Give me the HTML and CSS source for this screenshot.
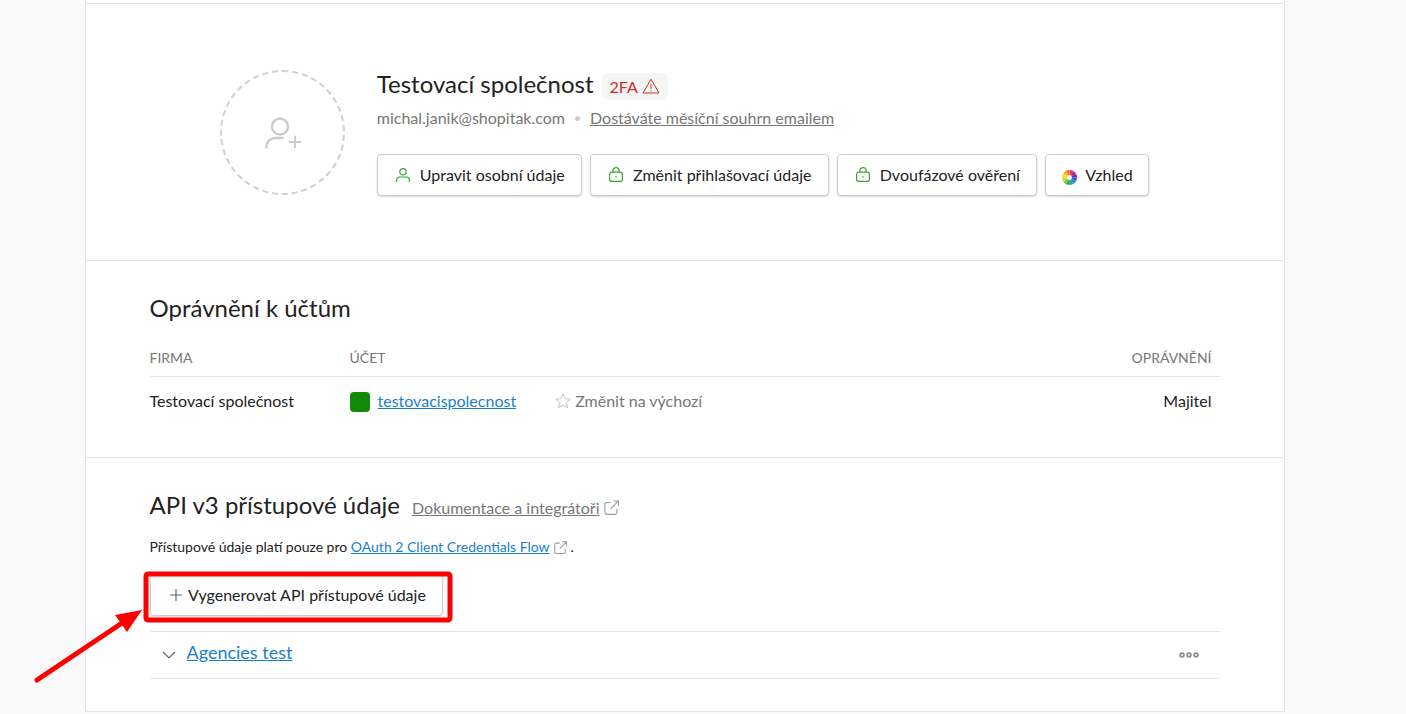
FILE: index.html
```html
<!DOCTYPE html>
<html lang="cs">
<head>
<meta charset="utf-8">
<title>Profil</title>
<link rel="stylesheet" href="styles.css">
</head>
<body>
<main class="card">
  <div class="top-strip"></div>
  <section class="profile">
    <div class="avatar">
      <svg class="avatar-icon" viewBox="0 0 36 36" width="36" height="36" fill="none" stroke="#ccc" stroke-width="2.400">
        <circle cx="15" cy="11.500" r="8"/>
        <path d="M1.500 33.500v-2c0-5 4-8.500 9-8.500h8"/>
        <path d="M24 27h12M30 21v12" stroke-width="2"/>
      </svg>
    </div>
    <div class="profile-body">
      <div class="title-row">
        <h1 class="title">Testovací společnost</h1>
        <span class="badge">2FA
          <svg viewBox="0 0 18 16" width="18" height="16" fill="none" stroke="#c9302c" stroke-width="1" stroke-linejoin="round"><path d="M9 1.200 17 15H1z"/><path d="M9 6v5M9 12.200v1.200"/></svg>
        </span>
      </div>
      <div class="meta-row">
        <span class="email">michal.janik@shopitak.com</span>
        <span class="dot"></span>
        <a class="muted-link" href="#">Dostáváte měsíční souhrn emailem</a>
      </div>
      <div class="button-row">
        <button class="btn">
          <svg class="btn-icon" viewBox="0 0 14 14" fill="none" stroke="#3aa535" stroke-width="1.200"><circle cx="7" cy="3.800" r="3.200"/><path d="M.6 14v-1.500C.6 10.300 2.300 9 4 9h6c1.700 0 3.400 1.300 3.400 3.500V14"/></svg>
          Upravit osobní údaje
        </button>
        <button class="btn">
          <svg class="btn-icon btn-lock" viewBox="0 0 14 15" fill="none" stroke="#3aa535" stroke-width="1.200"><rect x=".6" y="5.200" width="12.800" height="9.200" rx="2.200"/><path d="M3.800 5.200V3.800a3.200 3.200 0 0 1 6.400 0v1.400"/><circle cx="7" cy="9.800" r=".8" fill="#3aa535" stroke="none"/></svg>
          Změnit přihlašovací údaje
        </button>
        <button class="btn">
          <svg class="btn-icon btn-lock" viewBox="0 0 14 15" fill="none" stroke="#3aa535" stroke-width="1.200"><rect x=".6" y="5.200" width="12.800" height="9.200" rx="2.200"/><path d="M3.800 5.200V3.800a3.200 3.200 0 0 1 6.400 0v1.400"/><circle cx="7" cy="9.800" r=".8" fill="#3aa535" stroke="none"/></svg>
          Dvoufázové ověření
        </button>
        <button class="btn btn-wheel">
          <svg class="wheel" viewBox="0 0 16 16">
            <path d="M8 8V0A8 8 0 0 1 12 1.070z" fill="#e8373f"/>
            <path d="M8 8 12 1.070A8 8 0 0 1 14.930 4z" fill="#b5268f"/>
            <path d="M8 8 14.930 4A8 8 0 0 1 16 8z" fill="#6a2cb0"/>
            <path d="M8 8H16A8 8 0 0 1 14.930 12z" fill="#3f51d8"/>
            <path d="M8 8 14.930 12A8 8 0 0 1 12 14.930z" fill="#1e88e5"/>
            <path d="M8 8 12 14.930A8 8 0 0 1 8 16z" fill="#1fa8a0"/>
            <path d="M8 8V16A8 8 0 0 1 4 14.930z" fill="#3aa53c"/>
            <path d="M8 8 4 14.930A8 8 0 0 1 1.070 12z" fill="#8bc34a"/>
            <path d="M8 8 1.070 12A8 8 0 0 1 0 8z" fill="#cddc39"/>
            <path d="M8 8H0A8 8 0 0 1 1.070 4z" fill="#fde02f"/>
            <path d="M8 8 1.070 4A8 8 0 0 1 4 1.070z" fill="#fdb32a"/>
            <path d="M8 8 4 1.070A8 8 0 0 1 8 0z" fill="#f5761f"/>
            <circle cx="8" cy="8" r="2.600" fill="#fff"/>
          </svg>
          Vzhled
        </button>
      </div>
    </div>
  </section>

  <section class="permissions">
    <h2 class="heading">Oprávnění k účtům</h2>
    <div class="table">
      <div class="table-head">
        <span class="col-firm">FIRMA</span>
        <span class="col-account">ÚČET</span>
        <span class="col-role">OPRÁVNĚNÍ</span>
      </div>
      <div class="table-row">
        <span class="col-firm">Testovací společnost</span>
        <span class="col-account account-cell">
          <span class="swatch"></span>
          <a class="link" href="#">testovacispolecnost</a>
          <span class="set-default">
            <svg viewBox="0 0 16 16" width="16" height="16" fill="none" stroke="#c4c4c4" stroke-width="1" stroke-linejoin="round"><path d="M8 .9l2.200 4.700 5 .6-3.700 3.500 1 5.100L8 12.300l-4.500 2.500 1-5.100L.8 6.200l5-.6z"/></svg>
            Změnit na výchozí
          </span>
        </span>
        <span class="col-role">Majitel</span>
      </div>
    </div>
  </section>

  <section class="api">
    <div class="api-title">
      <h2 class="heading">API v3 přístupové údaje</h2>
      <a class="muted-link doc-link" href="#">Dokumentace a integrátoři</a>
      <svg class="ext" viewBox="0 0 16 16" width="15" height="15" fill="none" stroke="#999" stroke-width="1.200"><path d="M7 2.600H3A2 2 0 0 0 1 4.600v8.800a2 2 0 0 0 2 2h8.800a2 2 0 0 0 2-2V9.500"/><path d="M7 9.500 15 1.500M10 1h5.500v5.500"/></svg>
    </div>
    <p class="note">Přístupové údaje platí pouze pro <a class="link" href="#">OAuth 2 Client Credentials Flow</a>
      <svg class="ext-small" viewBox="0 0 16 16" width="13" height="13" fill="none" stroke="#999" stroke-width="1.300"><path d="M7 2.600H3A2 2 0 0 0 1 4.600v8.800a2 2 0 0 0 2 2h8.800a2 2 0 0 0 2-2V9.500"/><path d="M7 9.500 15 1.500M10 1h5.500v5.500"/></svg> .</p>
    <button class="btn btn-add">
      <svg class="btn-plus" viewBox="0 0 12 12" width="12" height="12" fill="none" stroke="#666" stroke-width="1.200"><path d="M6 0v12M0 6h12"/></svg>
      Vygenerovat API přístupové údaje
    </button>
    <div class="api-item">
      <svg class="chevron" viewBox="0 0 14 8" width="14" height="8" fill="none" stroke="#666" stroke-width="1.200"><path d="M1 1l6 6 6-6"/></svg>
      <a class="link item-link" href="#">Agencies test</a>
      <svg class="more" viewBox="0 0 20 6" width="20" height="6" fill="#ddd" stroke="#8a8a8a" stroke-width="1.500"><circle cx="3" cy="3" r="2"/><circle cx="10" cy="3" r="2"/><circle cx="17" cy="3" r="2"/></svg>
    </div>
  </section>
</main>

<svg class="annotation" viewBox="0 0 1406 714" width="1406" height="714">
  <rect x="146" y="574" width="304" height="46" rx="2" fill="none" stroke="#f00" stroke-width="5"/>
  <path d="M37 680 125 621" stroke="#f00" stroke-width="5" stroke-linecap="round"/>
  <path d="M115 615 142 610 127 632z" fill="#f00"/>
</svg>
</body>
</html>
```

FILE: styles.css
```css
* { box-sizing: border-box; }

html, body {
  margin: 0;
  height: 714px;
  overflow: hidden;
}

body {
  background: #fafafa;
  font-family: Lato, "Noto Sans", sans-serif;
  color: #222;
  position: relative;
}

.card {
  width: 1200px;
  margin-left: 84.5px;
  background: #fff;
  border-left: 1px solid #e5e5e5;
  border-right: 1px solid #e5e5e5;
}

.top-strip {
  height: 4px;
  border-bottom: 1px solid #e5e5e5;
}

.profile {
  height: 257px;
  padding: 66px 0 0 134.5px;
  display: flex;
  gap: 31.800px;
  border-bottom: 1px solid #e5e5e5;
}

.avatar {
  width: 125px;
  height: 125px;
  border: 2px dashed #d0d0d0;
  border-radius: 50%;
  display: flex;
  align-items: center;
  justify-content: center;
  flex: none;
}

.profile-body {
  display: flex;
  flex-direction: column;
}

.title-row {
  display: flex;
  align-items: center;
  gap: 8px;
  height: 30px;
}

.title {
  margin: 0 0 3px;
  font-size: 24px;
  font-weight: 400;
  line-height: 30px;
}

.badge {
  display: flex;
  align-items: center;
  gap: 4px;
  height: 27px;
  padding: 0 8px;
  background: #f5f5f5;
  border-radius: 6px;
  color: #c9302c;
  font-size: 16px;
  margin-top: 2px;
}

.meta-row {
  display: flex;
  align-items: center;
  margin-top: 8px;
  font-size: 16px;
  line-height: 20px;
  color: #777;
}

.dot {
  width: 5px;
  height: 5px;
  background: #ccc;
  border-radius: 50%;
  margin: 0 10px;
}

.muted-link {
  color: #777;
  text-decoration: underline;
}

.button-row {
  display: flex;
  gap: 8px;
  margin-top: 26px;
}

.btn {
  display: flex;
  align-items: center;
  height: 42px;
  padding: 0 16.300px 2px 18px;
  gap: 10px;
  background: #fff;
  border: 1px solid #ccc;
  border-radius: 4px;
  box-shadow: 0 1px 2px rgba(0, 0, 0, .15);
  font-family: inherit;
  font-size: 16px;
  color: #222;
  white-space: nowrap;
}

.btn-icon {
  width: 14px;
  height: 14px;
  margin-top: 2px;
}

.btn-lock {
  height: 15px;
  margin-top: 1px;
}

.btn-wheel {
  padding-left: 16px;
  padding-right: 15.500px;
  gap: 8px;
}

.wheel {
  width: 15px;
  height: 15px;
  margin-top: 7px;
}

.btn-plus { margin-top: 2px; }

.permissions {
  height: 197px;
  padding: 32px 64px 0;
  border-bottom: 1px solid #e5e5e5;
}

.heading {
  margin: 0;
  font-size: 24px;
  font-weight: 400;
  line-height: 30px;
  color: #222;
}

.table { margin-top: 25px; }

.table-head, .table-row {
  display: grid;
  grid-template-columns: 200px 1fr auto;
  padding-right: 8px;
}

.table-head {
  height: 29px;
  font-size: 14px;
  line-height: 20px;
  color: #777;
  border-bottom: 1px solid #e5e5e5;
}

.table-row {
  height: 47px;
  align-items: center;
  font-size: 16px;
}

.account-cell {
  display: flex;
  align-items: center;
}

.swatch {
  width: 20px;
  height: 20px;
  background: #138a07;
  border-radius: 4px;
  margin-right: 8px;
  transform: translateY(1px);
}

.link {
  color: #1a7fc9;
  text-decoration: underline;
}

.set-default {
  display: flex;
  align-items: center;
  gap: 4.500px;
  margin-left: 38.500px;
  color: #777;
}

.api {
  height: 254px;
  padding: 32px 64px 0;
  border-bottom: 1px solid #e5e5e5;
}

.api-title {
  display: flex;
  align-items: center;
  gap: 12px;
  font-size: 16px;
}

.doc-link { margin-top: 4px; }

.ext {
  margin: 5px 0 0 -7px;
}

.note {
  margin: 17px 0 0;
  font-size: 14px;
  line-height: 20px;
  color: #222;
}

.ext-small {
  vertical-align: -2px;
  margin-left: 1px;
}

.btn-add {
  margin-top: 17px;
  width: 293px;
  padding: 0 0 2px 19px;
  gap: 6.500px;
}

.api-item {
  display: flex;
  align-items: center;
  height: 48px;
  margin-top: 15px;
  padding: 0 21px 0 12px;
  border-top: 1px solid #e5e5e5;
  border-bottom: 1px solid #e5e5e5;
}

.chevron { margin-right: 11px; }

.item-link {
  font-size: 18px;
  margin-bottom: 6px;
}

.more { margin-left: auto; }

.annotation {
  position: absolute;
  left: 0;
  top: 0;
  pointer-events: none;
}
```
